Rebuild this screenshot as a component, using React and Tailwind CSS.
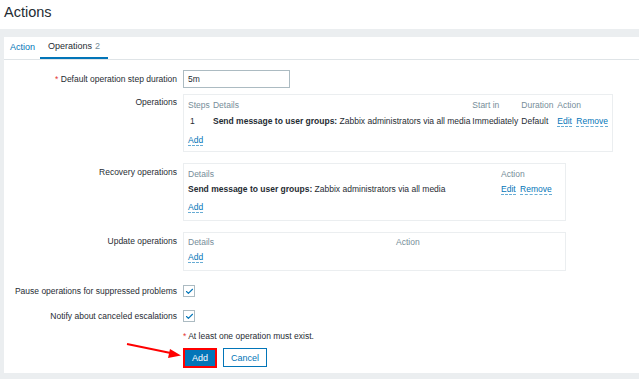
import { Check } from 'lucide-react'

const font = { fontFamily: '"Liberation Sans", Arial, sans-serif' }

const Link = ({ children, className = '' }) => (
  <span className={`text-[#0275b8] border-b border-dashed border-[#0275b8]/60 leading-[9px] ${className}`}>{children}</span>
)

const Label = ({ children, className = '' }) => (
  <div className={`text-right pr-[6px] text-[#1f2c33] ${className}`}>{children}</div>
)

const Checkbox = () => (
  <div className="w-[12px] h-[12px] border border-[#acbbc2] bg-white flex items-center justify-center">
    <Check className="w-[9px] h-[9px] text-[#0275b8]" strokeWidth={3} />
  </div>
)

const App = () => {
  return (
    <div className="w-[639px] h-[379px] bg-[#ebeef0] text-[8.5px] text-[#1f2c33] overflow-hidden relative" style={font}>
      {/* Header */}
      <div className="bg-white h-[29px] pl-[4px] flex items-center">
        <h1 className="text-[14.5px] text-[#1f2c33] leading-none -mt-[4px]">Actions</h1>
      </div>

      <div className="pl-[4px] pt-[8px]">
        <div className="bg-white h-[336px]">
          {/* Tabs */}
          <div className="h-[23px] border-b border-[#dfe4e7] flex items-end pl-[2px] text-[9px]">
            <div className="h-[22px] px-[4px] flex items-center text-[#0275b8]">Action</div>
            <div className="h-[22px] ml-[1px] px-[8px] flex items-center border-b-2 border-[#0275b8]">
              Operations <span className="text-[#768d99] ml-[3px]">2</span>
            </div>
          </div>

          {/* Form */}
          <div className="grid grid-cols-[179px_1fr] pt-[10px] leading-[10px]">
            <Label className="pt-[4px]"><span className="text-[#e33734]">*</span> Default operation step duration</Label>
            <div className="w-[107px] h-[18px] border border-[#acbbc2] px-[4px] flex items-center">5m</div>

            <Label className="pt-[9px]">Operations</Label>
            <div className="mt-[6px] w-[430px] h-[58px] border border-[#ebeef0] px-[4px] pt-[4px]">
              <table className="border-collapse text-left">
                <thead>
                  <tr className="text-[#768d99] h-[12px]">
                    <th className="font-normal w-[25px] p-0">Steps</th>
                    <th className="font-normal w-[261px] p-0">Details</th>
                    <th className="font-normal w-[49px] p-0">Start in</th>
                    <th className="font-normal w-[36px] p-0">Duration</th>
                    <th className="font-normal p-0">Action</th>
                  </tr>
                </thead>
                <tbody>
                  <tr className="h-[20px]">
                    <td className="p-0 pl-[2px]">1</td>
                    <td className="p-0"><b>Send message to user groups:</b> Zabbix administrators via all media</td>
                    <td className="p-0">Immediately</td>
                    <td className="p-0">Default</td>
                    <td className="p-0 whitespace-nowrap"><Link>Edit</Link> <Link className="ml-[2px]">Remove</Link></td>
                  </tr>
                </tbody>
              </table>
              <div className="mt-[4px]"><Link>Add</Link></div>
            </div>

            <Label className="pt-[15px]">Recovery operations</Label>
            <div className="mt-[11px] w-[383px] h-[58px] border border-[#ebeef0] px-[4px] pt-[4px]">
              <table className="border-collapse text-left">
                <thead>
                  <tr className="text-[#768d99] h-[12px]">
                    <th className="font-normal w-[313px] p-0">Details</th>
                    <th className="font-normal p-0">Action</th>
                  </tr>
                </thead>
                <tbody>
                  <tr className="h-[18px]">
                    <td className="p-0"><b>Send message to user groups:</b> Zabbix administrators via all media</td>
                    <td className="p-0 whitespace-nowrap"><Link>Edit</Link> <Link className="ml-[2px]">Remove</Link></td>
                  </tr>
                </tbody>
              </table>
              <div className="mt-[4px]"><Link>Add</Link></div>
            </div>

            <Label className="pt-[15px]">Update operations</Label>
            <div className="mt-[11px] w-[383px] h-[39px] border border-[#ebeef0] px-[4px] pt-[4px]">
              <div className="flex text-[#768d99] h-[12px]">
                <div className="w-[208px]">Details</div>
                <div>Action</div>
              </div>
              <div className="mt-[3px]"><Link>Add</Link></div>
            </div>

            <Label className="pt-[15px]">Pause operations for suppressed problems</Label>
            <div className="mt-[14px]"><Checkbox /></div>

            <Label className="pt-[14px]">Notify about canceled escalations</Label>
            <div className="mt-[13px]"><Checkbox /></div>

            <div />
            <div className="mt-[9px]"><span className="text-[#e33734]">*</span> At least one operation must exist.</div>

            <div />
            <div className="mt-[7px] flex gap-[6px]">
              <button className="w-[34px] h-[20px] bg-[#0275b8] text-white border-2 border-[#ff0000] text-[9px]">Add</button>
              <button className="w-[44px] h-[19px] bg-white text-[#0275b8] border border-[#0275b8] text-[9px]">Cancel</button>
            </div>
          </div>
        </div>
      </div>

      {/* Red arrow annotation */}
      <svg className="absolute left-[125px] top-[340px]" width="60" height="20" viewBox="0 0 60 20">
        <line x1="2" y1="4" x2="48" y2="13.5" stroke="#ff0000" strokeWidth="2" />
        <polygon points="56,15.5 45,9 43,18" fill="#ff0000" />
      </svg>
    </div>
  )
}

export default App
